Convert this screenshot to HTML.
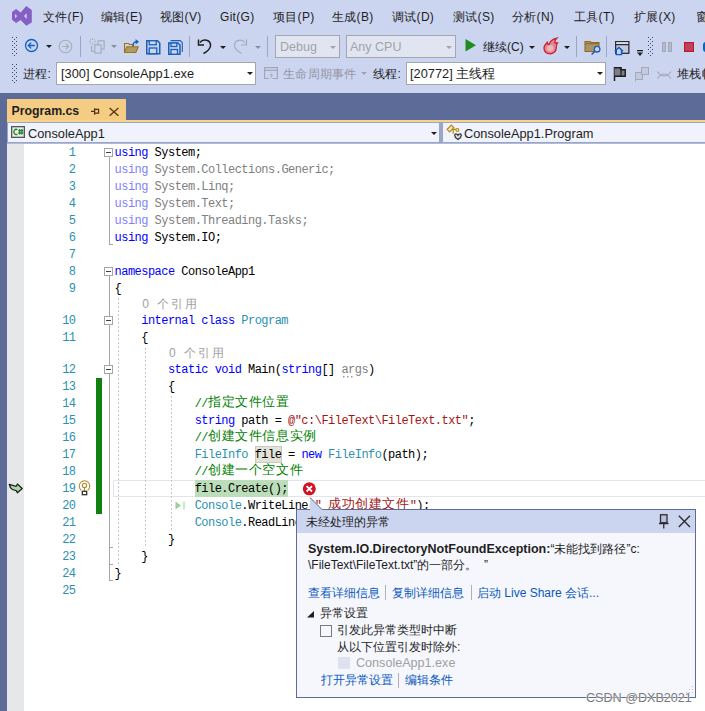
<!DOCTYPE html>
<html><head><meta charset="utf-8"><style>
*{box-sizing:border-box}
html,body{margin:0;padding:0}
body{width:705px;height:711px;overflow:hidden;position:relative;background:#CCD5F0;font-family:"Liberation Sans",sans-serif;font-size:12px;color:#1E1E1E}
.a{position:absolute;white-space:nowrap}
.m{position:absolute;top:10px;font-size:12px;line-height:14px;color:#1E1E1E;white-space:nowrap;letter-spacing:0.3px}
.code{position:absolute;font-family:"Liberation Mono",monospace;font-size:12px;letter-spacing:-0.53px;line-height:17px;height:17px;white-space:pre;color:#000}
.code .z{font-family:"Liberation Sans",sans-serif;font-size:13.33px;letter-spacing:0.6px;line-height:0;position:relative;top:-1px}
.kw{color:#0000FF}.ty{color:#2B91AF}.cm{color:#008000}.st{color:#A31515}
.fk{color:#7F7FFF}.fg{color:#808080}
.ln{position:absolute;left:38.5px;width:37px;text-align:right;font-family:"Liberation Mono",monospace;font-size:12px;letter-spacing:-0.53px;line-height:17px;color:#2B91AF}
.lens{position:absolute;font-family:"Liberation Sans",sans-serif;font-size:12px;line-height:15px;color:#A0A0A0;white-space:pre}
.tt{position:absolute;font-size:12px;line-height:16px;white-space:nowrap;color:#1E1E1E}
.lk{color:#0A57BE}
</style></head>
<body>
<svg class="a" style="left:0;top:0" width="40" height="32" viewBox="0 0 40 32"><path fill="#865FC5" fill-rule="evenodd" d="M12,12 L16.1,9 L20.6,12.4 L26.3,6 L31.8,9.9 L31.8,22.4 L26.3,25.8 L20.6,19.9 L16.1,22.9 L12,19.7 Z M15,13.9 L17.2,16 L15,18.2 Z M26.7,13.3 L24,16 L26.7,19 Z"/></svg>
<div class="m" style="left:43px">文件(F)</div>
<div class="m" style="left:101px">编辑(E)</div>
<div class="m" style="left:160px">视图(V)</div>
<div class="m" style="left:220px">Git(G)</div>
<div class="m" style="left:273px">项目(P)</div>
<div class="m" style="left:332px">生成(B)</div>
<div class="m" style="left:392px">调试(D)</div>
<div class="m" style="left:453px">测试(S)</div>
<div class="m" style="left:512px">分析(N)</div>
<div class="m" style="left:574px">工具(T)</div>
<div class="m" style="left:634px">扩展(X)</div>
<div class="m" style="left:696px">窗口(W)</div>
<svg class="a" style="left:12px;top:37px" width="5" height="20" fill="#40466A"><rect x="0" y="0" width="1" height="1"/><rect x="4" y="0" width="1" height="1"/><rect x="2" y="2" width="1" height="1"/><rect x="0" y="4" width="1" height="1"/><rect x="4" y="4" width="1" height="1"/><rect x="2" y="6" width="1" height="1"/><rect x="0" y="8" width="1" height="1"/><rect x="4" y="8" width="1" height="1"/><rect x="2" y="10" width="1" height="1"/><rect x="0" y="12" width="1" height="1"/><rect x="4" y="12" width="1" height="1"/><rect x="2" y="14" width="1" height="1"/><rect x="0" y="16" width="1" height="1"/><rect x="4" y="16" width="1" height="1"/><rect x="2" y="18" width="1" height="1"/></svg>
<svg class="a" style="left:24px;top:38px" width="15" height="15"><circle cx="7.5" cy="7.5" r="6" fill="#C8D2EE" stroke="#1060C0" stroke-width="1.3"/><path d="M10.8,7.5 H4.5 M7.2,4.6 L4.3,7.5 L7.2,10.4" fill="none" stroke="#1060C0" stroke-width="1.3"/></svg>
<svg class="a" style="left:46px;top:45px" width="6" height="4"><path d="M0,0 H6 L3,3 Z" fill="#1E1E1E"/></svg>
<svg class="a" style="left:58px;top:39px" width="15" height="15"><circle cx="7.5" cy="7.5" r="6.3" fill="none" stroke="#A8ABB8" stroke-width="1.1"/><path d="M4.2,7.5 H10.5 M7.8,4.6 L10.7,7.5 L7.8,10.4" fill="none" stroke="#A8ABB8" stroke-width="1.1"/></svg>
<div class="a" style="left:80px;top:36px;width:1px;height:21px;background:#9AA6C8"></div>
<svg class="a" style="left:89px;top:38px" width="17" height="17"><g fill="none" stroke="#A3A8B8" stroke-width="1.1"><rect x="9.1" y="2.8" width="6" height="8.2"/><rect x="5.8" y="6.9" width="6.3" height="8.2" fill="#CCD5F0"/><path d="M2.6,7.9 V13.3 H5.3"/><path d="M3.4,0 V1.8 M3.4,5 V6.8 M0,3.4 H1.8 M5,3.4 H6.8 M1.1,1.1 L2,2 M4.8,4.8 L5.7,5.7 M5.7,1.1 L4.8,2 M1.1,5.7 L2,4.8" stroke-width="0.9"/></g></svg>
<svg class="a" style="left:111px;top:45px" width="6" height="4"><path d="M0,0 H6 L3,3 Z" fill="#8A8E9C"/></svg>
<svg class="a" style="left:123px;top:38px" width="17" height="16"><path d="M1.5,14.5 V5.5 H5.5 L6.5,6.5 H10.5 V8.5" fill="none" stroke="#9B7419" stroke-width="1.1"/><path d="M1.5,14.5 L3.8,8.8 H15.3 L12.8,14.5 Z" fill="#B39B66" stroke="#9B7419" stroke-width="1.1" stroke-linejoin="round"/><path d="M9.8,8.5 C9.8,5.5 11,4 13.2,3.7" fill="none" stroke="#1B5FB8" stroke-width="1.3"/><path d="M12.6,1 L16,3.7 L12.6,6.4 Z" fill="#1B5FB8"/></svg>
<svg class="a" style="left:146px;top:40px" width="15" height="15"><path d="M0.75,0.75 H11.5 L13.75,3 V13.75 H0.75 Z" fill="#C6D1EE" stroke="#1B5FB8" stroke-width="1.5"/><rect x="3.25" y="0.75" width="7" height="4" fill="#CCD5F0" stroke="#1B5FB8" stroke-width="1.3"/><rect x="3.25" y="8" width="7.5" height="5.75" fill="#CCD5F0" stroke="#1B5FB8" stroke-width="1.3"/></svg>
<svg class="a" style="left:168px;top:40px" width="15" height="15"><path d="M2.5,0.6 H12.2 L14.3,2.7 V12" fill="none" stroke="#1B5FB8" stroke-width="1.1"/><path d="M0.75,3 H10 L12,5 V14.25 H0.75 Z" fill="#C6D1EE" stroke="#1B5FB8" stroke-width="1.5"/><rect x="3" y="3" width="5.8" height="3.5" fill="#CCD5F0" stroke="#1B5FB8" stroke-width="1.3"/><rect x="3" y="9.5" width="6.5" height="4.75" fill="#CCD5F0" stroke="#1B5FB8" stroke-width="1.3"/></svg>
<div class="a" style="left:189px;top:36px;width:1px;height:21px;background:#9AA6C8"></div>
<svg class="a" style="left:197px;top:38px" width="16" height="17"><path d="M3,4.5 C6,0.5 14,1.5 13.5,8 C13.2,10.5 11,13 6.5,15.5" fill="none" stroke="#1E1E1E" stroke-width="1.5"/><path d="M1.5,1.5 V7 H7" fill="none" stroke="#1E1E1E" stroke-width="1.5"/></svg>
<svg class="a" style="left:220px;top:46px" width="6" height="4"><path d="M0,0 H6 L3,3 Z" fill="#1E1E1E"/></svg>
<svg class="a" style="left:232px;top:38px" width="16" height="17"><path d="M13,4.5 C10,0.5 2,1.5 2.5,8 C2.8,10.5 5,13 9.5,15.5" fill="none" stroke="#A5A9B6" stroke-width="1.2"/><path d="M14.5,1.5 V7 H9" fill="none" stroke="#A5A9B6" stroke-width="1.2"/></svg>
<svg class="a" style="left:255px;top:46px" width="6" height="4"><path d="M0,0 H6 L3,3 Z" fill="#8A8E9C"/></svg>
<div class="a" style="left:267px;top:36px;width:1px;height:21px;background:#9AA6C8"></div>
<div class="a" style="left:275px;top:35px;width:65px;height:23px;background:#E0E5F1;border:1px solid #A4A6AE"></div>
<div class="a" style="left:280px;top:40px;font-size:12.5px;line-height:14px;color:#A2A4A8">Debug</div>
<svg class="a" style="left:330px;top:46px" width="6" height="4"><path d="M0,0 H6 L3,3 Z" fill="#A2A4A8"/></svg>
<div class="a" style="left:346px;top:35px;width:110px;height:23px;background:#E0E5F1;border:1px solid #A4A6AE"></div>
<div class="a" style="left:350px;top:40px;font-size:12.5px;line-height:14px;color:#A2A4A8">Any CPU</div>
<svg class="a" style="left:446px;top:46px" width="6" height="4"><path d="M0,0 H6 L3,3 Z" fill="#A2A4A8"/></svg>
<svg class="a" style="left:465px;top:39px" width="12" height="13"><path d="M0.5,0 L11,6.3 L0.5,12.6 Z" fill="#1E8C1E"/></svg>
<div class="m" style="left:483px;top:39.5px;letter-spacing:0">继续(C)</div>
<svg class="a" style="left:529px;top:46px" width="6" height="4"><path d="M0,0 H6 L3,3 Z" fill="#1E1E1E"/></svg>
<svg class="a" style="left:543px;top:37px" width="16" height="18"><path d="M7,16.8 C3.5,16.8 1,14.3 1,11.2 C1,8.5 2.8,6.8 4.4,5.3 C4.6,7 5.2,7.8 6,8 C6.5,4.5 10,2 14,1.1 C12,3 11.5,4.5 12,6 C12.8,5.8 13.8,5.8 14.5,5.8 C13.2,7.2 13.2,8.5 13.2,11 C13.2,14.3 10.5,16.8 7,16.8 Z" fill="#D98A95" stroke="#CC1F30" stroke-width="1.3"/><circle cx="7.2" cy="11.3" r="3.3" fill="#EFB3BC"/></svg>
<svg class="a" style="left:564px;top:46px" width="6" height="4"><path d="M0,0 H6 L3,3 Z" fill="#1E1E1E"/></svg>
<div class="a" style="left:576px;top:36px;width:1px;height:21px;background:#9AA6C8"></div>
<svg class="a" style="left:584px;top:40px" width="17" height="16"><path d="M1,1.5 H6 L7,2.5 H15 V11.5 H1 Z" fill="#A89270" stroke="#8F6A15" stroke-width="1.1"/><path d="M1,3.8 H15" stroke="#8F6A15" stroke-width="1"/><circle cx="13.1" cy="9.2" r="2.8" fill="#CCD5F0" stroke="#1B5FB8" stroke-width="1.3"/><path d="M11.1,11.2 L7.6,14.5" stroke="#1B5FB8" stroke-width="1.6"/></svg>
<div class="a" style="left:606px;top:36px;width:1px;height:21px;background:#9AA6C8"></div>
<svg class="a" style="left:614px;top:40px" width="18" height="16"><rect x="1.65" y="1.65" width="13.2" height="11.7" fill="#C3CADF" stroke="#2D2D30" stroke-width="1.3"/><rect x="2.3" y="2.3" width="11.9" height="2" fill="#E4E8F4"/><path d="M1.65,4.6 H14.85" stroke="#2D2D30" stroke-width="1.3"/><path d="M0.8,11.2 L4.9,7.3 L9,11.2 L7.6,11.2 V14.8 H2.2 V11.2 Z" fill="#CCD5F0"/><path d="M0.8,11.3 L4.9,7.4 L9,11.3 M2.3,10.3 V14.6 H7.5 V10.3" fill="none" stroke="#0A5BC4" stroke-width="1.4"/></svg>
<svg class="a" style="left:637px;top:50px" width="7" height="7"><rect x="0" y="0" width="6" height="1.3" fill="#1E1E1E"/><path d="M0,2.6 H6 L3,6 Z" fill="#1E1E1E"/></svg>
<svg class="a" style="left:648px;top:37px" width="5" height="20" fill="#40466A"><rect x="0" y="0" width="1" height="1"/><rect x="4" y="0" width="1" height="1"/><rect x="2" y="2" width="1" height="1"/><rect x="0" y="4" width="1" height="1"/><rect x="4" y="4" width="1" height="1"/><rect x="2" y="6" width="1" height="1"/><rect x="0" y="8" width="1" height="1"/><rect x="4" y="8" width="1" height="1"/><rect x="2" y="10" width="1" height="1"/><rect x="0" y="12" width="1" height="1"/><rect x="4" y="12" width="1" height="1"/><rect x="2" y="14" width="1" height="1"/><rect x="0" y="16" width="1" height="1"/><rect x="4" y="16" width="1" height="1"/><rect x="2" y="18" width="1" height="1"/></svg>
<div class="a" style="left:662px;top:42px;width:4px;height:10px;background:#B3B9CA;border:1px solid #A2A8BA"></div><div class="a" style="left:668px;top:42px;width:4px;height:10px;background:#B3B9CA;border:1px solid #A2A8BA"></div>
<div class="a" style="left:684px;top:42px;width:10px;height:10px;background:#B94455;border:1px solid #C8102E"></div>
<div class="a" style="left:703px;top:42px;width:6px;height:10px;background:#1060C0;border-radius:3px"></div>
<svg class="a" style="left:12px;top:64px" width="5" height="20" fill="#40466A"><rect x="0" y="0" width="1" height="1"/><rect x="4" y="0" width="1" height="1"/><rect x="2" y="2" width="1" height="1"/><rect x="0" y="4" width="1" height="1"/><rect x="4" y="4" width="1" height="1"/><rect x="2" y="6" width="1" height="1"/><rect x="0" y="8" width="1" height="1"/><rect x="4" y="8" width="1" height="1"/><rect x="2" y="10" width="1" height="1"/><rect x="0" y="12" width="1" height="1"/><rect x="4" y="12" width="1" height="1"/><rect x="2" y="14" width="1" height="1"/><rect x="0" y="16" width="1" height="1"/><rect x="4" y="16" width="1" height="1"/><rect x="2" y="18" width="1" height="1"/></svg>
<div class="m" style="left:23px;top:67px">进程:</div>
<div class="a" style="left:56px;top:62px;width:200px;height:23px;background:#FFFFFF;border:1px solid #A4A6AE"></div>
<div class="a" style="left:61px;top:66px;font-size:12.8px;line-height:15px;color:#1E1E1E">[300] ConsoleApp1.exe</div>
<svg class="a" style="left:247px;top:72px" width="6" height="4"><path d="M0,0 H6 L3,3 Z" fill="#1E1E1E"/></svg>
<svg class="a" style="left:264px;top:67px" width="14" height="13"><path d="M5,11.5 H0.6 V0.6 H13.4 V11.5 H8.5 M0.6,3.3 H13.4" fill="none" stroke="#A2A7B7" stroke-width="1.2"/><path d="M8.3,5 L5.5,8.6 H7.5 L5.8,12.5 L9.2,7.8 H7.2 Z" fill="#A2A7B7"/></svg>
<div class="m" style="left:283px;top:67px;color:#9296A4">生命周期事件</div>
<svg class="a" style="left:361px;top:72px" width="6" height="4"><path d="M0,0 H6 L3,3 Z" fill="#9FA3AE"/></svg>
<div class="m" style="left:373px;top:67px">线程:</div>
<div class="a" style="left:406px;top:62px;width:200px;height:23px;background:#FFFFFF;border:1px solid #A4A6AE"></div>
<div class="a" style="left:410px;top:66px;font-size:12.8px;line-height:15px;color:#1E1E1E">[20772] 主线程</div>
<svg class="a" style="left:597px;top:72px" width="6" height="4"><path d="M0,0 H6 L3,3 Z" fill="#1E1E1E"/></svg>
<svg class="a" style="left:613px;top:67px" width="14" height="15"><path d="M1.5,0 V14" stroke="#1E1E1E" stroke-width="1.5"/><path d="M1.5,0.75 H8 V2.75 H12.25 V9.25 H8 V9.25 H1.5" fill="#7A7C86" stroke="#1E1E1E" stroke-width="1.4"/><path d="M8,0.75 V9.25" stroke="#1E1E1E" stroke-width="1.2"/></svg>
<svg class="a" style="left:635px;top:67px" width="15" height="15" fill="#C3CAE0" stroke="#A5A9B6" stroke-width="1"><rect x="0.5" y="5.5" width="7" height="7"/><rect x="6.5" y="0.5" width="7" height="7"/><path d="M0.5,12.5 V14.5" fill="none"/></svg>
<svg class="a" style="left:657px;top:70px" width="15" height="10"><path d="M0.5,1.5 C4,7.5 10,7.5 14,1.5 M0.5,8.5 C4,2.5 10,2.5 14,8.5" fill="none" stroke="#A5A9B6" stroke-width="1.1"/></svg>
<div class="m" style="left:677px;top:67px">堆栈帧:</div>
<div class="a" style="left:0;top:93px;width:705px;height:618px;background:#5D6B99"></div>
<div class="a" style="left:7px;top:99px;width:119px;height:23px;background:#F5CC84"></div>
<div class="a" style="left:7px;top:120px;width:698px;height:2px;background:#F9D38A"></div>
<div class="a" style="left:11.5px;top:104px;font-size:12.3px;font-weight:bold;line-height:14px;color:#1E1E1E">Program.cs</div>
<svg class="a" style="left:90px;top:107px" width="10" height="9"><path d="M1,4.3 H4.5 M4.6,1.2 V7.8 M4.6,2.4 H8.6 V6.2 H4.6" fill="none" stroke="#4A3210" stroke-width="1.2"/></svg>
<svg class="a" style="left:109px;top:107px" width="10" height="10"><path d="M0.6,1 L9.4,8.8 M9.4,1 L0.6,8.8" stroke="#5B3A14" stroke-width="1.4"/></svg>
<div class="a" style="left:7px;top:122px;width:698px;height:22px;background:#9AA6C8"></div>
<div class="a" style="left:8px;top:123px;width:431px;height:19px;background:#F0F3FB"></div>
<div class="a" style="left:443px;top:123px;width:262px;height:19px;background:#F0F3FB"></div>
<div class="a" style="left:7px;top:143px;width:698px;height:1px;background:#AEBBDD"></div>
<svg class="a" style="left:11px;top:126px" width="14" height="12"><rect x="0.65" y="0.65" width="12.7" height="10.7" fill="#E9EBF2" stroke="#555555" stroke-width="1.3"/><path d="M6.4,3.7 A2.3,2.6 0 1 0 6.4,8.1" fill="none" stroke="#1F8A1F" stroke-width="1.3"/><path d="M8.6,3 V8.6 M10.9,3 V8.6 M7.3,4.6 H12.3 M7.3,7 H12.3" stroke="#1F8A1F" stroke-width="1.3"/></svg>
<div class="a" style="left:28px;top:125.5px;font-size:12.8px;line-height:15px;color:#1E1E1E">ConsoleApp1</div>
<svg class="a" style="left:431px;top:132px" width="6" height="4"><path d="M0,0 H6 L3,3 Z" fill="#1E1E1E"/></svg>
<svg class="a" style="left:446px;top:124px" width="17" height="17"><path d="M1.1,5.3 L5.3,1.1 L7.9,3.8 L3.7,7.9 Z" fill="#E3E3E3" stroke="#B88A00" stroke-width="1.2"/><path d="M7.2,5 V9.8 M6.3,5.3 H10" fill="none" stroke="#B88A00" stroke-width="1.2"/><circle cx="11.4" cy="6" r="1.5" fill="#E3E3E3" stroke="#B88A00" stroke-width="1.1"/><path d="M12,11.2 C11,9.5 8.7,9.4 8.7,11.4 C8.7,13 10.5,14.5 12,15.5 C13.5,14.5 15.3,13 15.3,11.4 C15.3,9.4 13,9.5 12,11.2 Z" fill="#DEDEDE" stroke="#333" stroke-width="1.3"/></svg>
<div class="a" style="left:464px;top:125.5px;font-size:12.8px;line-height:15px;color:#1E1E1E">ConsoleApp1.Program</div>
<div class="a" style="left:7px;top:144px;width:698px;height:567px;background:#FFFFFF"></div>
<div class="a" style="left:7px;top:144px;width:17px;height:567px;background:#E6E7E8"></div>
<div class="a" style="left:113px;top:480px;width:600px;height:17px;border:1px solid #E4E4EE"></div>
<div class="a" style="left:195px;top:480px;width:93px;height:17px;background:#BCDDB9"></div>
<div class="a" style="left:255px;top:446px;width:27px;height:17px;background:#E2E3D6;border:1px solid #C9CABB"></div>
<div class="ln" style="top:145px">1</div>
<div class="ln" style="top:162px">2</div>
<div class="ln" style="top:179px">3</div>
<div class="ln" style="top:196px">4</div>
<div class="ln" style="top:213px">5</div>
<div class="ln" style="top:230px">6</div>
<div class="ln" style="top:247px">7</div>
<div class="ln" style="top:264px">8</div>
<div class="ln" style="top:281px">9</div>
<div class="ln" style="top:313px">10</div>
<div class="ln" style="top:330px">11</div>
<div class="ln" style="top:362px">12</div>
<div class="ln" style="top:379px">13</div>
<div class="ln" style="top:396px">14</div>
<div class="ln" style="top:413px">15</div>
<div class="ln" style="top:430px">16</div>
<div class="ln" style="top:447px">17</div>
<div class="ln" style="top:464px">18</div>
<div class="ln" style="top:481px">19</div>
<div class="ln" style="top:498px">20</div>
<div class="ln" style="top:515px">21</div>
<div class="ln" style="top:532px">22</div>
<div class="ln" style="top:549px">23</div>
<div class="ln" style="top:566px">24</div>
<div class="ln" style="top:583px">25</div>
<div class="code" style="left:114.60px;top:144.7px"><span class="kw">using</span> System;</div>
<div class="code" style="left:114.60px;top:161.7px"><span class="fk">using</span><span class="fg"> System.Collections.Generic;</span></div>
<div class="code" style="left:114.60px;top:178.7px"><span class="fk">using</span><span class="fg"> System.Linq;</span></div>
<div class="code" style="left:114.60px;top:195.7px"><span class="fk">using</span><span class="fg"> System.Text;</span></div>
<div class="code" style="left:114.60px;top:212.7px"><span class="fk">using</span><span class="fg"> System.Threading.Tasks;</span></div>
<div class="code" style="left:114.60px;top:229.7px"><span class="kw">using</span> System.IO;</div>
<div class="code" style="left:114.60px;top:263.7px"><span class="kw">namespace</span> ConsoleApp1</div>
<div class="code" style="left:114.60px;top:280.7px">{</div>
<div class="lens" style="left:142.28px;top:297px">0</div>
<div class="lens" style="left:157.28px;top:297px;font-size:12px;letter-spacing:1.9px">个引用</div>
<div class="code" style="left:141.28px;top:312.7px"><span class="kw">internal</span> <span class="kw">class</span> <span class="ty">Program</span></div>
<div class="code" style="left:141.28px;top:329.7px">{</div>
<div class="lens" style="left:168.96px;top:346px">0</div>
<div class="lens" style="left:183.96px;top:346px;font-size:12px;letter-spacing:1.9px">个引用</div>
<div class="code" style="left:167.96px;top:361.7px"><span class="kw">static</span> <span class="kw">void</span> Main(<span class="kw">string</span>[] <span class="fg">args</span>)</div>
<div class="code" style="left:167.96px;top:378.7px">{</div>
<div class="code" style="left:194.64px;top:395.7px"><span class="cm">//<span class="z">指定文件位置</span></span></div>
<div class="code" style="left:194.64px;top:412.7px"><span class="kw">string</span> path = <span class="st">@"c:\FileText\FileText.txt"</span>;</div>
<div class="code" style="left:194.64px;top:429.7px"><span class="cm">//<span class="z">创建文件信息实例</span></span></div>
<div class="code" style="left:194.64px;top:446.7px"><span class="ty">FileInfo</span> file = <span class="kw">new</span> <span class="ty">FileInfo</span>(path);</div>
<div class="code" style="left:194.64px;top:463.7px"><span class="cm">//<span class="z">创建一个空文件</span></span></div>
<div class="code" style="left:194.64px;top:480.7px">file.Create();</div>
<div class="code" style="left:194.64px;top:497.7px"><span class="ty">Console</span>.WriteLine(<span class="st">" <span class="z">成功创建文件</span>"</span>);</div>
<div class="code" style="left:194.64px;top:514.7px"><span class="ty">Console</span>.ReadLine();</div>
<div class="code" style="left:167.96px;top:531.7px">}</div>
<div class="code" style="left:141.28px;top:548.7px">}</div>
<div class="code" style="left:114.60px;top:565.7px">}</div>
<svg class="a" style="left:343px;top:376px" width="10" height="2" fill="#9A9A9A"><rect x="0" y="0" width="1.5" height="1.5"/><rect x="4" y="0" width="1.5" height="1.5"/><rect x="8" y="0" width="1.5" height="1.5"/></svg>
<div class="a" style="left:109px;top:157px;width:1px;height:88px;background:#A5A5A5"></div>
<div class="a" style="left:109px;top:244px;width:4px;height:1px;background:#A5A5A5"></div>
<div class="a" style="left:109px;top:276px;width:1px;height:305px;background:#A5A5A5"></div>
<div class="a" style="left:109px;top:547px;width:4px;height:1px;background:#A5A5A5"></div>
<div class="a" style="left:109px;top:564px;width:4px;height:1px;background:#A5A5A5"></div>
<div class="a" style="left:109px;top:580px;width:4px;height:1px;background:#A5A5A5"></div>
<div class="a" style="left:104px;top:148px;width:9px;height:9px;background:#fff;border:1px solid #A5A5A5"></div><div class="a" style="left:106px;top:152px;width:5px;height:1px;background:#424242"></div>
<div class="a" style="left:104px;top:267px;width:9px;height:9px;background:#fff;border:1px solid #A5A5A5"></div><div class="a" style="left:106px;top:271px;width:5px;height:1px;background:#424242"></div>
<div class="a" style="left:104px;top:316px;width:9px;height:9px;background:#fff;border:1px solid #A5A5A5"></div><div class="a" style="left:106px;top:320px;width:5px;height:1px;background:#424242"></div>
<div class="a" style="left:104px;top:365px;width:9px;height:9px;background:#fff;border:1px solid #A5A5A5"></div><div class="a" style="left:106px;top:369px;width:5px;height:1px;background:#424242"></div>
<div class="a" style="left:118px;top:298px;width:1px;height:267px;background:repeating-linear-gradient(#C8C8C8 0 2px,transparent 2px 4px)"></div>
<div class="a" style="left:145px;top:348px;width:1px;height:200px;background:repeating-linear-gradient(#C8C8C8 0 2px,transparent 2px 4px)"></div>
<div class="a" style="left:171px;top:396px;width:1px;height:135px;background:repeating-linear-gradient(#C8C8C8 0 2px,transparent 2px 4px)"></div>
<div class="a" style="left:96px;top:378px;width:6px;height:136px;background:#108010"></div>
<svg class="a" style="left:8px;top:482px" width="16" height="13"><path d="M1.3,2.4 Q4.5,3.6 8.2,4.3 L9.4,2.1 L14.2,6.4 L9.4,10.7 L8.2,8.7 Q4.2,8.2 2.4,5.6 Z" fill="#A5DCA0" stroke="#222" stroke-width="1.3" stroke-linejoin="round"/></svg>
<svg class="a" style="left:78px;top:479px" width="14" height="17"><path d="M3.3,11.3 A5.3,5.3 0 1 1 9.7,11.3" fill="none" stroke="#B8892A" stroke-width="1.1"/><circle cx="6.5" cy="6.4" r="2.1" fill="none" stroke="#B8892A" stroke-width="1.1"/><path d="M6.5,8.5 V12" stroke="#B8892A" stroke-width="1.1"/><rect x="4.3" y="12.3" width="4.4" height="3.4" fill="#fff" stroke="#333" stroke-width="1.3"/></svg>
<svg class="a" style="left:302px;top:482px" width="15" height="14"><circle cx="7.3" cy="6.8" r="6.5" fill="#D11124"/><path d="M4.6,4.1 L10,9.5 M10,4.1 L4.6,9.5" stroke="#fff" stroke-width="1.8"/></svg>
<svg class="a" style="left:175px;top:501px" width="11" height="9"><path d="M0.5,0.5 L6,4.5 L0.5,8.5 Z" fill="#9AD29A"/><rect x="8.5" y="0.5" width="1" height="8" fill="#9AD29A"/></svg>
<div class="a" style="left:296px;top:509px;width:400px;height:189px;background:#F5F7FD;border:1px solid #5D6B99"></div>
<div class="a" style="left:297px;top:510px;width:398px;height:22.5px;background:#CCD5F0"></div>
<svg class="a" style="left:309px;top:497px" width="15" height="14"><path d="M1,0.5 V13 H14 Z" fill="#CCD5F0"/><path d="M1,0.5 L13.5,13" stroke="#5D6B99" stroke-width="1"/><path d="M1,0.5 V12.5" stroke="#5D6B99" stroke-width="0"/></svg>
<div class="tt" style="left:306px;top:514px">未经处理的异常</div>
<svg class="a" style="left:659px;top:514px" width="10" height="15"><rect x="1.5" y="0.75" width="6.5" height="8" fill="#B8C2DE" stroke="#2D2D30" stroke-width="1.3"/><path d="M0,9.5 H9.5 M4.75,9.5 V14.5" stroke="#2D2D30" stroke-width="1.3"/></svg>
<svg class="a" style="left:678px;top:515px" width="13" height="13"><path d="M0.8,0.8 L12,12 M12,0.8 L0.8,12" stroke="#2D2D30" stroke-width="1.4"/></svg>
<div class="tt" style="left:308px;top:541px"><b style="font-size:12.5px">System.IO.DirectoryNotFoundException:</b>“未能找到路径”c:</div>
<div class="tt" style="left:308px;top:557px">\FileText\FileText.txt”的一部分。&nbsp;&nbsp;”</div>
<div class="tt lk" style="left:307.5px;top:585px">查看详细信息</div>
<div class="a" style="left:385px;top:585px;width:1px;height:15px;background:#B0B0B8"></div>
<div class="tt lk" style="left:392px;top:585px">复制详细信息</div>
<div class="a" style="left:471px;top:585px;width:1px;height:15px;background:#B0B0B8"></div>
<div class="tt lk" style="left:477px;top:585px">启动 Live Share 会话...</div>
<svg class="a" style="left:307px;top:611px" width="8" height="7"><path d="M7,0 V6.5 H0 Z" fill="#1E1E1E"/></svg>
<div class="tt" style="left:320px;top:605px">异常设置</div>
<div class="a" style="left:320px;top:625px;width:12px;height:12px;background:#F5F7FD;border:1px solid #7A7A7A"></div>
<div class="tt" style="left:337px;top:622px">引发此异常类型时中断</div>
<div class="tt" style="left:337px;top:639px">从以下位置引发时除外:</div>
<div class="a" style="left:338px;top:657px;width:12px;height:12px;background:#DDE2EE"></div>
<div class="tt" style="left:356px;top:655px;color:#A0A0A0;font-size:12.6px">ConsoleApp1.exe</div>
<div class="tt lk" style="left:321px;top:672px">打开异常设置</div>
<div class="a" style="left:398px;top:673px;width:1px;height:15px;background:#B0B0B8"></div>
<div class="tt lk" style="left:405px;top:672px">编辑条件</div>
<svg class="a" style="left:686px;top:686px" width="9" height="10" fill="#B8BFD6"><rect x="6" y="0" width="1" height="1"/><rect x="6" y="3" width="1" height="1"/><rect x="3" y="3" width="1" height="1"/><rect x="6" y="6" width="1" height="1"/><rect x="3" y="6" width="1" height="1"/><rect x="0" y="6" width="1" height="1"/></svg>
<div class="a" style="left:586px;top:689.5px;font-size:12.6px;line-height:16px;color:#7A7A7A;text-shadow:0 0 1px #fff,0 0 1px #fff">CSDN @DXB2021</div>
</body></html>
